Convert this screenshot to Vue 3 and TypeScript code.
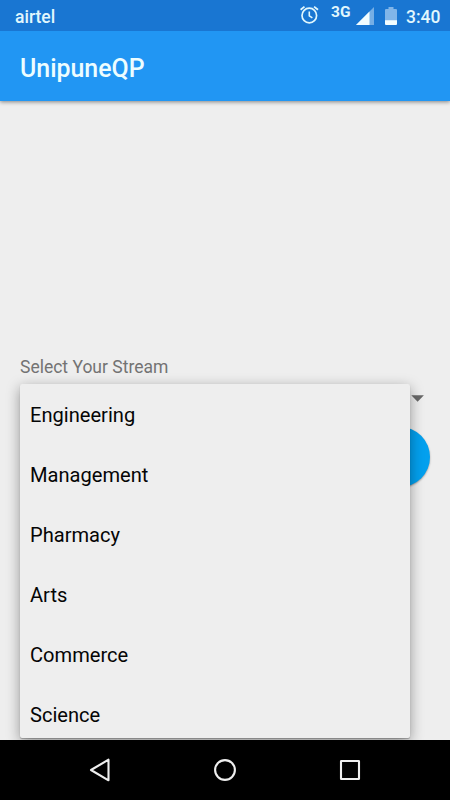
<script setup lang="ts">
const streams: string[] = ['Engineering', 'Management', 'Pharmacy', 'Arts', 'Commerce', 'Science']
</script>

<template>
  <div class="screen">
    <header class="status">
      <span class="carrier">airtel</span>
      <svg class="alarm" width="20" height="20" viewBox="0 0 20 20" fill="none" stroke="#e1f7fd">
        <circle cx="10.300" cy="10.500" r="7.300" stroke-width="1.700" />
        <path d="M10.300 6.500v4.400l3.100 2" stroke-width="1.600" />
        <path d="M1.600 4.800 5.500 1.600M15.100 1.600l3.900 3.200" stroke-width="1.800" />
      </svg>
      <span class="network">3G</span>
      <svg class="signal" width="18" height="18" viewBox="0 0 18 18">
        <path d="M0 18 18 0v18z" fill="#75aee5" />
        <path d="M0 18 13.500 4.500V18z" fill="#f2fdff" />
      </svg>
      <svg class="battery" width="12" height="18" viewBox="0 0 12 18">
        <path d="M3.500 0h5v2H11q1 0 1 1v11H0V3q0-1 1-1h2.500z" fill="#80b5e9" />
        <path d="M0 13.300h12V17q0 1-1 1H1q-1 0-1-1z" fill="#f2fdff" />
      </svg>
      <span class="clock">3:40</span>
    </header>
    <div class="toolbar"><h1>UnipuneQP</h1></div>
    <main class="content">
      <label class="label">Select Your Stream</label>
      <div class="spinner">
        <svg width="13" height="7" viewBox="0 0 13 7"><path d="M.3.300h12.600L6.600 6.800z" fill="#686868" /></svg>
      </div>
      <div class="action-row"><button class="fab" aria-label="Continue"></button></div>
      <ul class="menu">
        <li v-for="stream in streams" :key="stream">{{ stream }}</li>
      </ul>
    </main>
    <nav class="navbar">
      <svg width="24" height="26" viewBox="0 0 24 26"><path d="M4 13 21.500 2.700v20.600z" fill="none" stroke="#eee" stroke-width="2.100" stroke-linejoin="round" /></svg>
      <svg width="24" height="26" viewBox="0 0 24 26"><circle cx="12" cy="13" r="9.900" fill="none" stroke="#eee" stroke-width="2.100" /></svg>
      <svg width="24" height="26" viewBox="0 0 24 26"><rect x="3" y="4" width="18" height="18" rx=".3" fill="none" stroke="#eee" stroke-width="2.100" /></svg>
    </nav>
  </div>
</template>

<style>
body {
  margin: 0;
}
</style>

<style scoped>
.screen {
  width: 450px;
  height: 800px;
  display: flex;
  flex-direction: column;
  overflow: hidden;
  background: #eee;
  font-family: Roboto, sans-serif;
}
.status {
  height: 31px;
  flex: none;
  box-sizing: border-box;
  padding: 0 10px 0 15px;
  display: flex;
  align-items: flex-start;
  position: relative;
  z-index: 2;
  background: #1976d2;
  color: #e1f7fd;
  font-weight: 500;
}
.carrier {
  flex: 1;
  font-size: 17.500px;
  line-height: 20px;
  margin-top: 7px;
}
.alarm {
  margin: 5px 12px 0 0;
}
.network {
  width: 21px;
  font-size: 15.500px;
  font-weight: 700;
  line-height: 18px;
  margin: 3px 4px 0 0;
}
.signal {
  margin: 7px 11px 0 0;
}
.battery {
  margin: 7px 9px 0 0;
}
.clock {
  width: 34px;
  white-space: nowrap;
  font-size: 17.500px;
  line-height: 20px;
  margin-top: 7px;
}
.toolbar {
  height: 70px;
  flex: none;
  display: flex;
  align-items: center;
  padding: 5px 20px 0;
  box-sizing: border-box;
  background: #2196f3;
  color: #edfdff;
  box-shadow: 0 1px 4px rgba(0, 0, 0, 0.45);
  z-index: 1;
}
h1 {
  margin: 0;
  font-size: 24.900px;
  font-weight: 500;
  line-height: 30px;
}
.content {
  position: relative;
  flex: 1;
  min-height: 0;
  overflow: hidden;
  box-sizing: border-box;
  padding: 254px 20px 0;
  display: flex;
  flex-direction: column;
}
.label {
  font-size: 17.500px;
  line-height: 24px;
  color: #737373;
}
.spinner {
  height: 48px;
  display: flex;
  align-items: flex-start;
  justify-content: flex-end;
  padding: 16px 6px 0 0;
  box-sizing: border-box;
}
.action-row {
  display: flex;
  justify-content: flex-end;
}
.fab {
  width: 60px;
  height: 60px;
  border: 0;
  padding: 0;
  border-radius: 50%;
  background: #03a0ee;
  box-shadow: 0 1px 2px rgba(0, 0, 0, 0.35);
}
.menu {
  position: absolute;
  left: 20px;
  top: 283px;
  width: 390px;
  height: 354px;
  margin: 0;
  padding: 0;
  list-style: none;
  overflow: hidden;
  border-radius: 2px;
  background: #eee;
  box-shadow: 0 1px 1px rgba(0, 0, 0, 0.25), 0 4px 14px rgba(0, 0, 0, 0.38);
}
.menu li {
  height: 60px;
  line-height: 62px;
  padding-left: 10px;
  font-size: 20.100px;
  color: #050505;
}
.navbar {
  height: 60px;
  flex: none;
  box-sizing: border-box;
  padding: 0 88px 0 87px;
  display: flex;
  justify-content: space-between;
  align-items: center;
  background: #000;
}
</style>
